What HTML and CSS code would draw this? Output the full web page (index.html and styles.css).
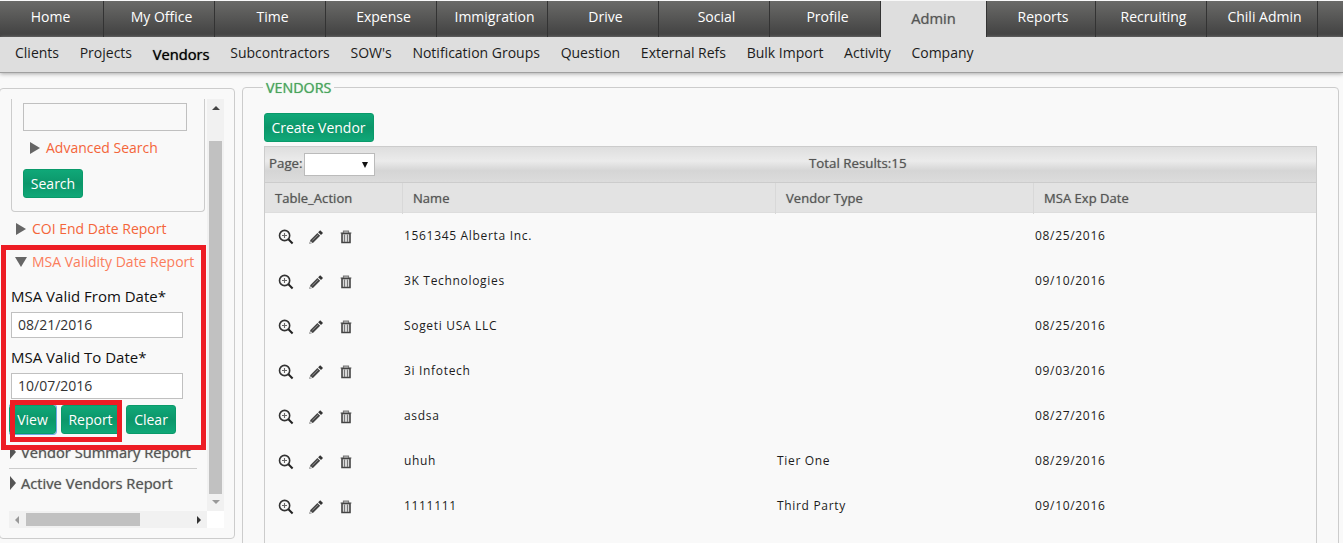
FILE: index.html
```html
<!DOCTYPE html>
<html lang="en">
<head>
<meta charset="utf-8">
<title>Vendors</title>
<link rel="stylesheet" href="styles.css">
</head>
<body>
<svg class="defs" width="0" height="0" aria-hidden="true">
  <symbol id="zoom" viewBox="0 0 16 16"><circle cx="6.6" cy="6.5" r="5.1" fill="none" stroke="#333" stroke-width="1.6"/><path d="M10.4 10.3 14.6 14.5" stroke="#222" stroke-width="2"/><path d="M4 6.5h5M6.5 4v5" stroke="#666" stroke-width="1.1"/></symbol>
  <symbol id="pencil" viewBox="0 0 16 16"><path d="M1.3 14.8 2.4 11 9.4 4 12.2 6.7 5.2 13.7Z" fill="#444"/><path d="M10.1 3.3 12.2 1.3 15 4.1 13 6.1Z" fill="#333"/><path d="M2.6 11.9 4.4 13.7 1.8 14.4Z" fill="#ddd"/><path d="M4.3 11.4 10.2 5.7" stroke="#999" stroke-width=".9"/></symbol>
  <symbol id="trash" viewBox="0 0 16 16"><path d="M5.5 3.4V2.2h5v1.2M2.5 4h11" fill="none" stroke="#777" stroke-width="1.2"/><path d="M4 4.5h8v9H4Z" fill="#ddd" stroke="#444" stroke-width="1.6"/><path d="M6.5 5.5v7.5M9.5 5.5v7.5" stroke="#777" stroke-width="1.1"/></symbol>
</svg>
<nav class="tabs">
  <a class="tab first">Home</a><a class="tab">My Office</a><a class="tab">Time</a><a class="tab">Expense</a><a class="tab">Immigration</a><a class="tab">Drive</a><a class="tab">Social</a><a class="tab">Profile</a><a class="tab active">Admin</a><a class="tab reports">Reports</a><a class="tab">Recruiting</a><a class="tab">Chili Admin</a>
</nav>
<nav class="subnav">
  <a>Clients</a><a>Projects</a><a class="current">Vendors</a><a>Subcontractors</a><a>SOW's</a><a>Notification Groups</a><a>Question</a><a>External Refs</a><a>Bulk Import</a><a>Activity</a><a>Company</a>
</nav>
<div class="page">
  <aside class="sidebar">
    <div class="scroller">
      <div class="content">
        <div class="search-box">
          <div class="search-input"></div>
          <div class="toggle advanced"><i class="tri right"></i><span>Advanced Search</span></div>
          <button class="btn search-btn">Search</button>
        </div>
        <div class="toggle coi"><i class="tri right"></i><span>COI End Date Report</span></div>
        <div class="toggle msa"><i class="tri down"></i><span>MSA Validity Date Report</span></div>
        <div class="field"><label>MSA Valid From Date*</label><div class="date">08/21/2016</div></div>
        <div class="field"><label>MSA Valid To Date*</label><div class="date">10/07/2016</div></div>
        <div class="actions"><button class="btn view">View</button><button class="btn report">Report</button><button class="btn clear">Clear</button></div>
        <div class="report-link summary"><i class="tri narrow"></i><span>Vendor Summary Report</span></div>
        <div class="report-link vendors"><i class="tri narrow"></i><span>Active Vendors Report</span></div>
      </div>
      <div class="vbar"><i class="arrow up"></i><div class="vthumb"></div><i class="arrow dn"></i></div>
      <div class="hbar"><i class="arrow lt"></i><div class="hthumb"></div><i class="arrow rt"></i></div>
      <div class="corner"></div>
    </div>
  </aside>
  <main class="main">
    <h1 class="legend"><span>VENDORS</span></h1>
    <button class="btn create">Create Vendor</button>
    <section class="grid">
      <div class="pager"><span class="page-label">Page:</span><span class="select"><i class="caret"></i></span><span class="total">Total Results:15</span></div>
      <div class="row head"><span>Table_Action</span><span>Name</span><span>Vendor Type</span><span>MSA Exp Date</span></div>
      <div class="row"><span class="icons"><svg><use href="#zoom"/></svg><svg><use href="#pencil"/></svg><svg><use href="#trash"/></svg></span><span>1561345 Alberta Inc.</span><span></span><span>08/25/2016</span></div>
      <div class="row"><span class="icons"><svg><use href="#zoom"/></svg><svg><use href="#pencil"/></svg><svg><use href="#trash"/></svg></span><span>3K Technologies</span><span></span><span>09/10/2016</span></div>
      <div class="row"><span class="icons"><svg><use href="#zoom"/></svg><svg><use href="#pencil"/></svg><svg><use href="#trash"/></svg></span><span>Sogeti USA LLC</span><span></span><span>08/25/2016</span></div>
      <div class="row"><span class="icons"><svg><use href="#zoom"/></svg><svg><use href="#pencil"/></svg><svg><use href="#trash"/></svg></span><span>3i Infotech</span><span></span><span>09/03/2016</span></div>
      <div class="row"><span class="icons"><svg><use href="#zoom"/></svg><svg><use href="#pencil"/></svg><svg><use href="#trash"/></svg></span><span>asdsa</span><span></span><span>08/27/2016</span></div>
      <div class="row"><span class="icons"><svg><use href="#zoom"/></svg><svg><use href="#pencil"/></svg><svg><use href="#trash"/></svg></span><span>uhuh</span><span>Tier One</span><span>08/29/2016</span></div>
      <div class="row"><span class="icons"><svg><use href="#zoom"/></svg><svg><use href="#pencil"/></svg><svg><use href="#trash"/></svg></span><span>1111111</span><span>Third Party</span><span>09/10/2016</span></div>
    </section>
  </main>
</div>
<div class="mark mark-form"></div>
<div class="mark mark-buttons"></div>
</body>
</html>
```
FILE: styles.css
```css
* { box-sizing: border-box; }
body { margin: 0; padding-top: 1px; height: 543px; overflow: hidden; background: #f9f9f9; font: 14px/20px "Open Sans", sans-serif; color: #1c1c1c; }
.defs { display: none; }
.tabs { display: flex; height: 36px; background: linear-gradient(#6a6a68, #404040); }
.tab { flex: none; width: 111px; padding-left: 5px; border-right: 1px solid #333; text-align: center; line-height: 32px; color: #fff; }
.tab.first { width: 104px; padding: 0 2px 0 0; }
.tab.active { width: 106px; padding: 0; background: #dedede; color: #555; font-size: 14.7px; line-height: 34px; text-shadow: 0 0 1px #888; }
.tab.reports { width: 109px; padding-left: 4px; }
.subnav { display: flex; gap: 20.7px; height: 36px; padding-left: 15px; background: #dedede; border-bottom: 1px solid #a0a0a0; box-shadow: 0 1px 4px #aaa; line-height: 32px; white-space: nowrap; }
.current { color: #000; font-size: 14.7px; text-shadow: 0 0 1px #333; line-height: 34px; }
.page { display: flex; gap: 7px; padding-top: 14px; }
.sidebar { flex: none; width: 236px; height: 451px; margin: 1px 0 0 -1px; border: 1px solid #ccc; border-radius: 4px; padding: 10px 0 0 9px; }
.scroller { display: grid; grid-template: 412px 17px / 198px 17px; }
.content { overflow: hidden; white-space: nowrap; }
.search-box { width: 194px; height: 113px; margin-left: 2px; border: 1px solid #ccc; border-top: 0; border-radius: 0 0 4px 4px; padding: 4px 11px 0; }
.search-input { width: 164px; height: 28px; border: 1px solid #c0c0c0; }
.toggle { display: flex; align-items: center; gap: 6px; height: 20px; color: #f4653a; }
.advanced { margin: 7px 0 0 7px; }
.search-btn { width: 60px; margin-top: 11px; }
.coi { margin: 7px 0 0 7px; }
.msa { margin: 13px 0 0 6px; color: #fb7d5c; }
.tri { flex: none; }
.tri.right { border-left: 10px solid #666; border-top: 6px solid transparent; border-bottom: 6px solid transparent; }
.tri.down { border-top: 10px solid #666; border-left: 6px solid transparent; border-right: 6px solid transparent; margin-right: -1px; }
.tri.narrow { border-left: 6px solid #555; border-top: 7px solid transparent; border-bottom: 7px solid transparent; }
.btn { display: block; height: 29px; padding: 0; border: 1px solid #0a9a6a; border-radius: 3px; background: linear-gradient(#10a878, #0c966a 50%, #10a878); color: #fff; font: 14px/25px "Open Sans", sans-serif; text-align: center; }
.field { height: 61px; padding: 14px 0 0 2px; }
label { display: block; height: 26px; font-size: 15px; line-height: 20px; color: #111; }
.date { width: 172px; height: 26px; border: 1px solid #c0c0c0; background: #fff; padding-left: 6px; line-height: 24px; color: #333; }
.actions { display: flex; height: 29px; margin-top: 11px; }
.view { width: 47px; box-shadow: 0 0 0 1px #70a8e8; }
.report { width: 59px; margin-left: 5px; }
.clear { width: 50px; margin-left: 6px; }
.report-link { display: flex; align-items: center; gap: 5px; width: 188px; color: #555; font-size: 14.7px; text-shadow: 0 0 1px #888; padding-left: 1px; }
.summary { height: 35px; border-bottom: 1px solid #ccc; padding-top: 2px; }
.vendors { height: 28px; }
.vbar { background: #f1f1f1; display: flex; flex-direction: column; align-items: center; padding-top: 7px; }
.vthumb { width: 13px; height: 353px; background: #c1c1c1; margin-top: 31px; }
.hbar { background: #f1f1f1; display: flex; align-items: center; padding-left: 6px; }
.hthumb { width: 114px; height: 13px; background: #c1c1c1; margin-left: 7px; }
.corner { background: #fff; }
.arrow.up { border: 4px solid transparent; border-top: 0; border-bottom: 4px solid #444; }
.arrow.dn { border: 4px solid transparent; border-bottom: 0; border-top: 4px solid #999; margin-top: 6px; }
.arrow.lt { border: 4px solid transparent; border-left: 0; border-right: 4px solid #999; }
.arrow.rt { border: 4px solid transparent; border-right: 0; border-left: 4px solid #333; margin-left: 57px; }
.main { flex: none; width: 1097px; height: 470px; border: 1px solid #ccc; border-radius: 4px; padding: 0 21px; }
.legend { margin: -9px 0 0 -1px; height: 34px; font: 14.3px/18px "Open Sans", sans-serif; color: #49a45c; text-shadow: 0 0 1px #70b880; }
.legend span { display: inline-block; background: #f9f9f9; padding: 0 3px; }
.create { width: 110px; padding-right: 1px; }
.grid { margin-top: 4px; width: 1053px; height: 420px; border: 1px solid #ccc; }
.pager { display: flex; align-items: center; height: 36px; padding-left: 4px; border-bottom: 1px solid #ccc; background: linear-gradient(#dedede, #ebebeb 40%, #d5d5d5 68%, #dcdcdc); font-size: 13.3px; color: #555; text-shadow: 0 0 1px #888; }
.page-label { width: 35px; }
.page-label, .total { padding-bottom: 4px; }
.select { display: flex; align-items: center; justify-content: flex-end; width: 71px; height: 23px; border: 1px solid #bbb; background: #fff; padding-right: 6px; }
.caret { border: 4px solid transparent; border-bottom: 0; border-top: 6px solid #111; border-left-width: 3px; border-right-width: 3px; }
.total { margin-left: 434px; }
.row { display: grid; grid-template-columns: 138px 373px 258px 1fr; height: 45px; line-height: 45px; font-size: 12px; letter-spacing: .68px; }
.row > span { padding-left: 1px; }
.row .icons { display: flex; align-items: center; gap: 14px; padding: 3px 0 0 13px; }
.icons svg { width: 16px; height: 16px; }
.row.head { height: 30px; line-height: 31px; background: #e3e3e3; border-bottom: 1px solid #ddd; font-size: 13px; letter-spacing: .04px; color: #555; text-shadow: 0 0 1px #888; }
.head > span { padding-left: 10px; border-right: 1px solid #d8d8d8; }
.head > span:last-child { border: 0; }
.mark { position: absolute; border: 5px solid #ed1c24; }
.mark-form { left: 1px; top: 245px; width: 205px; height: 205px; }
.mark-buttons { left: 10px; top: 400px; width: 112px; height: 42px; }
```
